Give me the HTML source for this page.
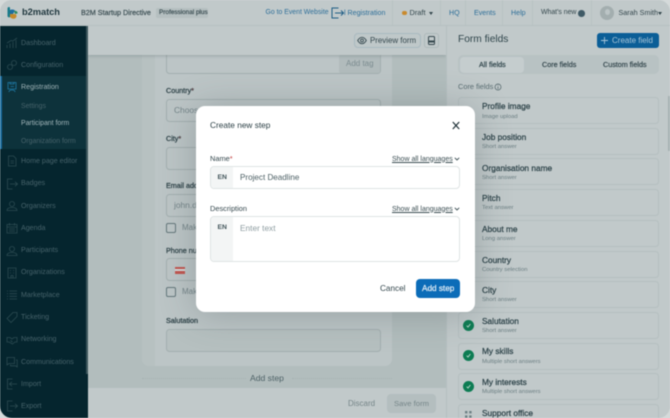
<!DOCTYPE html>
<html><head><meta charset="utf-8">
<style>
*{box-sizing:border-box}
html,body{margin:0;padding:0;width:670px;height:418px;overflow:hidden;background:#d5dada}
body{font-family:"Liberation Sans",sans-serif}
#page{position:absolute;left:0;top:0;width:670px;height:418px;overflow:hidden;border-radius:12px;background:#b2bdbd;filter:blur(.45px)}
.a{position:absolute;white-space:nowrap;line-height:1}
.m{-webkit-text-stroke:.2px currentColor}
.box{position:absolute}
.nav{position:absolute;left:21px;font-size:7.1px;line-height:10px;color:#46626a;white-space:nowrap}
.ic{position:absolute;left:6px;width:12px;height:12px;fill:none;stroke:#2c4b52;stroke-width:.8}
.lab{position:absolute;font-size:7.2px;line-height:9px;color:#2c4046;white-space:nowrap;-webkit-text-stroke:.25px #2c4046}
.inp{position:absolute;background:#bcc5c6;border:1px solid #a3afb0;border-radius:3.5px}
.cb{position:absolute;left:166px;width:10px;height:10px;border:1px solid #64777b;border-radius:2px}
.fc{position:absolute;left:458px;width:201px;height:27px;border:1px solid #b5bfc0;border-radius:3.5px;background:#c1c9ca}
.ft{position:absolute;left:482px;font-size:8.3px;line-height:10px;color:#2f454b;white-space:nowrap;-webkit-text-stroke:.25px #2f454b}
.fs{position:absolute;left:482px;font-size:5.9px;line-height:8px;color:#6c7f83;white-space:nowrap}
.chk{position:absolute;left:463px;width:11px;height:11px;border-radius:50%;background:#0d7c53}
.chk svg{position:absolute;left:3px;top:3px;width:5px;height:5px;fill:none;stroke:#b7d5c7;stroke-width:1}
.top{position:absolute;top:8px;font-size:7.1px;line-height:10px;color:#2e6f99;white-space:nowrap}
.sep{position:absolute;top:0;width:1px;height:25px;background:#b9c3c4}
.mt{position:absolute;font-size:7.6px;line-height:10px;color:#34474d;white-space:nowrap}
.show{position:absolute;left:392px;font-size:7px;line-height:9px;color:#3a4d52;text-decoration:underline;white-space:nowrap}
.chev{position:absolute;left:453.5px;width:6px;height:4px;fill:none;stroke:#3a4d52;stroke-width:.9}
</style></head><body>
<div id="page">

<!-- main content -->
<div class="box" style="left:142px;top:55px;width:250px;height:311px;background:#bcc5c6;border-radius:0 0 7px 7px"></div>
<div class="box" style="left:142px;top:55px;width:13px;height:311px;background:#b7c1c1;border-radius:0 0 0 7px"></div>

<div class="inp" style="left:166px;top:52px;width:215px;height:22px"></div>
<div class="box" style="left:339px;top:55px;width:41px;height:18px;background:#b1bbbc;border-radius:2px"></div>
<div class="a" style="left:346px;top:60px;font-size:8px;color:#7c8c90">Add tag</div>

<div class="lab" style="left:166px;top:86px">Country<span style="color:#b13a3a">*</span></div>
<div class="inp" style="left:166px;top:99px;width:215px;height:23px"></div>
<div class="a" style="left:174px;top:106px;font-size:8.4px;color:#748488">Choose</div>

<div class="lab" style="left:166px;top:134px">City<span style="color:#b13a3a">*</span></div>
<div class="inp" style="left:166px;top:147px;width:215px;height:23px"></div>

<div class="lab" style="left:166px;top:181px">Email address</div>
<div class="inp" style="left:166px;top:194px;width:215px;height:23px"></div>
<div class="a" style="left:174px;top:201px;font-size:8.4px;color:#748488">john.doe</div>
<div class="cb" style="top:223px"></div>
<div class="a" style="left:182px;top:224px;font-size:8px;color:#748488">Make</div>

<div class="lab" style="left:166px;top:246px">Phone number</div>
<div class="inp" style="left:166px;top:258px;width:215px;height:23px"></div>
<div class="box" style="left:175px;top:267px;width:10px;height:2.2px;background:#c2554f"></div>
<div class="box" style="left:175px;top:269.2px;width:10px;height:2.2px;background:#d7dcdc"></div>
<div class="box" style="left:175px;top:271.4px;width:10px;height:2.2px;background:#c2554f"></div>
<div class="cb" style="top:287px"></div>
<div class="a" style="left:182px;top:288px;font-size:8px;color:#748488">Make</div>

<div class="lab" style="left:166px;top:316px">Salutation</div>
<div class="inp" style="left:166px;top:329px;width:215px;height:23px;background:#b6c0c0"></div>

<div class="box" style="left:142px;top:377.5px;width:104px;border-top:1px dotted #a6b1b1"></div>
<div class="box" style="left:292px;top:377.5px;width:100px;border-top:1px dotted #a6b1b1"></div>
<div class="a" style="left:250px;top:373.5px;font-size:8.6px;color:#4e6267">Add step</div>

<!-- sub bar -->
<div class="box" style="left:88px;top:26px;width:358px;height:29px;background:#c1c9ca;box-shadow:0 1px 3px rgba(90,105,108,.35)"></div>
<div class="box" style="left:354px;top:33px;width:67px;height:15px;border:1px solid #a9b9c0;border-radius:4px;background:#bfc8c9"></div>
<svg class="box" style="left:357px;top:36px;width:10px;height:9px" viewBox="0 0 10 9" fill="none" stroke="#34474d" stroke-width=".9"><path d="M.7 4.5C2 2.3 3.4 1.3 5 1.3S8 2.3 9.3 4.5C8 6.7 6.6 7.7 5 7.7S2 6.7.7 4.5Z"/><circle cx="5" cy="4.5" r="1.4"/></svg>
<div class="a" style="left:370px;top:36.5px;font-size:7.9px;color:#34474d">Preview form</div>
<div class="box" style="left:424px;top:33px;width:15px;height:15px;border:1px solid #adb9ba;border-radius:3px"></div>
<svg class="box" style="left:428px;top:36px;width:7px;height:9px" viewBox="0 0 7 9"><rect x=".5" y=".5" width="6" height="8" rx="1" fill="none" stroke="#34474d"/><rect x=".5" y="4.5" width="6" height="2" fill="#34474d"/></svg>

<!-- bottom bar -->
<div class="box" style="left:88px;top:388px;width:358px;height:30px;background:#c1c9ca"></div>
<div class="a" style="left:348px;top:400px;font-size:8px;color:#768689">Discard</div>
<div class="box" style="left:387px;top:394px;width:49px;height:19px;background:#b4bebf;border-radius:4px"></div>
<div class="a" style="left:394px;top:400px;font-size:7.7px;color:#768689">Save form</div>

<!-- right panel -->
<div class="box" style="left:446px;top:26px;width:224px;height:392px;background:#c1c9ca;border-left:1px solid #b5bfc0"></div>
<div class="a" style="left:458px;top:34.5px;font-size:10.2px;color:#2f454b">Form fields</div>
<div class="box" style="left:597px;top:33px;width:62px;height:15px;background:#0b5e97;border-radius:3px"></div>
<svg class="box" style="left:601px;top:37px;width:7px;height:7px" viewBox="0 0 7 7" stroke="#a8c5d8" stroke-width=".9"><path d="M3.5 0V7M0 3.5H7"/></svg>
<div class="a" style="left:612px;top:37px;font-size:8px;color:#a8c5d8">Create field</div>
<div class="box" style="left:458px;top:55px;width:201px;height:19px;background:#b8c2c3;border-radius:5px"></div>
<div class="box" style="left:460px;top:57px;width:64px;height:15.5px;background:#c5cdce;border-radius:4px"></div>
<div class="a m" style="left:479px;top:61px;font-size:7.2px;color:#2f454b">All fields</div>
<div class="a m" style="left:542px;top:61px;font-size:7.2px;color:#34474d">Core fields</div>
<div class="a m" style="left:603px;top:61px;font-size:7.2px;color:#34474d">Custom fields</div>
<div class="a" style="left:458px;top:83px;font-size:7.4px;color:#5a6d72">Core fields</div>
<svg class="box" style="left:494px;top:83px;width:8px;height:8px" viewBox="0 0 8 8" fill="none" stroke="#4f6267" stroke-width=".7"><circle cx="4" cy="4" r="3"/><path d="M4 3.5V6M4 2V2.8"/></svg>

<div class="fc" style="top:97px"></div><div class="ft" style="top:101px">Profile image</div><div class="fs" style="top:112.5px">Image upload</div>
<div class="fc" style="top:127.6px"></div><div class="ft" style="top:131.5px">Job position</div><div class="fs" style="top:143px">Short answer</div>
<div class="fc" style="top:158.4px"></div><div class="ft" style="top:162.5px">Organisation name</div><div class="fs" style="top:173.5px">Short answer</div>
<div class="fc" style="top:189px"></div><div class="ft" style="top:193px">Pitch</div><div class="fs" style="top:204px">Text answer</div>
<div class="fc" style="top:219.8px"></div><div class="ft" style="top:223.5px">About me</div><div class="fs" style="top:235px">Long answer</div>
<div class="fc" style="top:250.6px"></div><div class="ft" style="top:254.5px">Country</div><div class="fs" style="top:265.5px">Country selection</div>
<div class="fc" style="top:281.3px"></div><div class="ft" style="top:285px">City</div><div class="fs" style="top:296px">Short answer</div>
<div class="fc" style="top:311.6px"></div><div class="ft" style="top:315.5px">Salutation</div><div class="fs" style="top:327px">Short answer</div>
<div class="chk" style="top:319.5px"><svg viewBox="0 0 5 5"><path d="M.7 2.7 2 4 4.4 1"/></svg></div>
<div class="fc" style="top:342.5px"></div><div class="ft" style="top:346px">My skills</div><div class="fs" style="top:357.5px">Multiple short answers</div>
<div class="chk" style="top:350px"><svg viewBox="0 0 5 5"><path d="M.7 2.7 2 4 4.4 1"/></svg></div>
<div class="fc" style="top:373px"></div><div class="ft" style="top:377px">My interests</div><div class="fs" style="top:388px">Multiple short answers</div>
<div class="chk" style="top:380.5px"><svg viewBox="0 0 5 5"><path d="M.7 2.7 2 4 4.4 1"/></svg></div>
<div class="fc" style="top:403.6px;height:30px"></div><div class="ft" style="top:408px">Support office</div>
<svg class="box" style="left:465px;top:411px;width:7px;height:7px" viewBox="0 0 7 7" fill="#6c7f83"><rect width="2.4" height="2.4"/><rect x="4.2" width="2.4" height="2.4"/><rect y="4.4" width="2.4" height="2.4"/><rect x="4.2" y="4.4" width="2.4" height="2.4"/></svg>
<div class="box" style="left:667.5px;top:96px;width:2.5px;height:55px;background:#a7b2b3"></div>

<!-- top bar -->
<div class="box" style="left:0;top:0;width:670px;height:26px;background:#c1c9ca;border-bottom:1px solid #b6c0c1"></div>
<svg class="box" style="left:6px;top:6px;width:13px;height:14px" viewBox="0 0 13 14"><path d="M1.5 2.5C1.5 1 3 .5 4 1.5V11C3 12 1.5 11 1.5 10Z" fill="#1a7b8a"/><path d="M4 4C6 3 8 3.5 9 4.5L7 8 4 8Z" fill="#1d6ea1"/><path d="M4 8H8.5C10.5 8 11 10 10 11.5 8.5 13.5 5.500 13 4 11Z" fill="#c58a2b"/><path d="M8 5C10 4.5 12 5.5 11.5 7.5L9 8Z" fill="#2d8a62"/></svg>
<div class="a" style="left:22px;top:8px;font-size:9.3px;font-weight:bold;color:#20383f;letter-spacing:-.05px">b2match</div>
<div class="a m" style="left:81px;top:9px;font-size:7.2px;color:#3b4e53">B2M Startup Directive</div>
<div class="box" style="left:156px;top:8px;width:52px;height:10px;background:#b5bfc0;border-radius:2px"></div>
<div class="a m" style="left:159px;top:9.5px;font-size:6.4px;color:#3b4e53">Professional plus</div>
<div class="top" style="left:265.5px;font-size:6.9px">Go to Event Website</div>
<svg class="box" style="left:331px;top:7px;width:13px;height:12px" viewBox="0 0 13 12" fill="none" stroke="#1f5d85" stroke-width="1"><path d="M7.5 1H1V11H7.5M4 6H12.5M10 3.5 12.5 6 10 8.5"/></svg>
<div class="top" style="left:344px">l Registration</div>
<div class="sep" style="left:392px"></div>
<div class="box" style="left:402px;top:10.5px;width:4.5px;height:4.5px;border-radius:50%;background:#c98a2e"></div>
<div class="a" style="left:409.5px;top:8.8px;font-size:7.4px;color:#34474d">Draft</div>
<div class="box" style="left:429px;top:11.5px;border:2.5px solid transparent;border-top:3px solid #34474d"></div>
<div class="sep" style="left:440px"></div>
<div class="top" style="left:449px">HQ</div>
<div class="sep" style="left:465px"></div>
<div class="top" style="left:474px">Events</div>
<div class="sep" style="left:502px"></div>
<div class="top" style="left:511px">Help</div>
<div class="sep" style="left:532px"></div>
<div class="top" style="left:541px;color:#34474d;font-size:6.9px">What's new</div>
<div class="box" style="left:578px;top:10px;width:6.5px;height:6.5px;border-radius:50%;background:#3f5a66"></div>
<div class="sep" style="left:591px"></div>
<div class="box" style="left:600px;top:6px;width:14px;height:14px;border-radius:50%;background:#a3aeaf"></div>
<div class="box" style="left:604.5px;top:8.5px;width:5px;height:6px;border-radius:50%;background:#bcc5c6"></div>
<div class="a" style="left:618.5px;top:8.8px;font-size:7.2px;color:#34474d">Sarah Smith</div>
<div class="box" style="left:658px;top:11.5px;border:2.2px solid transparent;border-top:3px solid #34474d"></div>

<!-- sidebar -->
<div class="box" style="left:0;top:26px;width:88px;height:392px;background:#05252e"></div>
<div class="box" style="left:0;top:76px;width:86px;height:73px;background:#0d323b"></div>
<div class="box" style="left:0;top:76px;width:1.5px;height:73px;background:#1a6d9f"></div>
<div class="box" style="left:86px;top:26px;width:2px;height:348px;background:#3d565c"></div>

<svg class="ic" style="top:37px" viewBox="0 0 12 12"><path d="M1 11V8M4 11V6.5M7 11V5M10 11V3M1 6 5 3.5 7 4 11 1"/></svg><div class="nav" style="top:37.5px">Dashboard</div>
<svg class="ic" style="top:59px" viewBox="0 0 12 12"><circle cx="8" cy="4" r="2.5"/><circle cx="4" cy="8" r="2.5"/></svg><div class="nav" style="top:59.8px">Configuration</div>
<svg class="ic" style="top:81px;stroke:#1f7aa6" viewBox="0 0 12 12"><path d="M2 1.5H10V8H2ZM4 1V3H8V1M3 11C3 9 5 9 6 9S9 9 9 11M4.5 5.5H8"/></svg><div class="nav" style="top:82px;color:#9eb2b6">Registration</div>
<div class="nav" style="top:101.5px;font-size:6.9px">Settings</div>
<div class="nav" style="top:119px;font-size:6.9px;color:#a3b7bb">Participant form</div>
<div class="nav" style="top:136.5px;font-size:6.9px">Organization form</div>
<svg class="ic" style="top:155px" viewBox="0 0 12 12"><path d="M2.5 1H7.5L10 3.5V11H2.5ZM4.5 6H8M4.5 8H8"/></svg><div class="nav" style="top:156px">Home page editor</div>
<svg class="ic" style="top:178px" viewBox="0 0 12 12"><path d="M6.5 1H1.5V11H6.5M4 6H11.5M9 3.8 11.5 6 9 8.2"/></svg><div class="nav" style="top:178.3px">Badges</div>
<svg class="ic" style="top:200px" viewBox="0 0 12 12"><circle cx="6" cy="4" r="2.5"/><path d="M1 10.5C1 8 4 7.5 6 7.5S11 8 11 10.5Z"/></svg><div class="nav" style="top:200.6px">Organizers</div>
<svg class="ic" style="top:222px" viewBox="0 0 12 12"><path d="M1 2.5H11V11H1ZM1 5H11M3.5 1V3.5M8.5 1V3.5M3 7H9M3 9H9"/></svg><div class="nav" style="top:222.8px">Agenda</div>
<svg class="ic" style="top:245px" viewBox="0 0 12 12"><circle cx="6" cy="4" r="2.5"/><path d="M1 10.5C1 8 4 7.5 6 7.5S11 8 11 10.5Z"/></svg><div class="nav" style="top:245.1px">Participants</div>
<svg class="ic" style="top:267px" viewBox="0 0 12 12"><path d="M2 1H10V11H2ZM4 3.5H5M7 3.5H8M4 6H5M7 6H8M5 11V8.5H7V11"/></svg><div class="nav" style="top:267.4px">Organizations</div>
<svg class="ic" style="top:289px" viewBox="0 0 12 12"><path d="M3.5 2H11M3.5 4.7H11M3.5 7.3H11M3.5 10H11M1 2H2M1 4.7H2M1 7.3H2M1 10H2"/></svg><div class="nav" style="top:289.7px">Marketplace</div>
<svg class="ic" style="top:311px" viewBox="0 0 12 12"><path d="M1 7.5 7 1.5H11V5.5L5 11.5Z"/></svg><div class="nav" style="top:312px">Ticketing</div>
<svg class="ic" style="top:334px" viewBox="0 0 12 12"><path d="M1 3.5H4L6 5 8 3.5H11V8H9L6.5 10 3 8H1ZM4.5 6.5 6.5 8"/></svg><div class="nav" style="top:334.3px">Networking</div>
<svg class="ic" style="top:356px" viewBox="0 0 12 12"><path d="M1 1.5H8.5V7.5H3L1 9ZM10 4H11.2V11L9.5 9.8H4.5V8.5"/></svg><div class="nav" style="top:356.5px">Communications</div>
<svg class="ic" style="top:378px" viewBox="0 0 12 12"><path d="M6.5 1H1.5V11H6.5M11 6H3.5M6 3.8 3.5 6 6 8.2"/></svg><div class="nav" style="top:378.8px">Import</div>
<svg class="ic" style="top:400px" viewBox="0 0 12 12"><path d="M6.5 1H1.5V11H6.5M4 6H11.5M9 3.8 11.5 6 9 8.2"/></svg><div class="nav" style="top:401px">Export</div>

<!-- modal -->
<div class="box" style="left:196px;top:106px;width:279px;height:206px;background:#fff;border-radius:9px;box-shadow:0 2px 36px rgba(70,85,88,.32)"></div>
<div class="a" style="left:210px;top:120.5px;font-size:8.3px;color:#2b3f45">Create new step</div>
<svg class="box" style="left:452px;top:121px;width:8px;height:9px" viewBox="0 0 8 9" stroke="#1f3138" stroke-width="1.2"><path d="M.8 1 7.200 8M7.200 1 .8 8"/></svg>

<div class="mt" style="left:210px;top:153.5px;font-size:7.4px">Name<span style="color:#c23b3b">*</span></div>
<div class="show" style="top:154.5px">Show all languages</div>
<svg class="chev" style="top:157px" viewBox="0 0 6 4"><path d="M.8.8 3 3 5.200.8"/></svg>
<div class="box" style="left:210px;top:166px;width:250px;height:23px;border:1px solid #dfe4e4;border-radius:4px;overflow:hidden"><div style="position:absolute;left:0;top:0;width:22px;height:100%;background:#f3f5f5"></div></div>
<div class="a" style="left:217.5px;top:174.5px;font-size:6.8px;font-weight:bold;color:#42555a">EN</div>
<div class="a" style="left:240px;top:174px;font-size:8.100px;color:#4e6166">Project Deadline</div>

<div class="mt" style="left:210px;top:204px;font-size:7.4px">Description</div>
<div class="show" style="top:204.5px">Show all languages</div>
<svg class="chev" style="top:207px" viewBox="0 0 6 4"><path d="M.8.8 3 3 5.200.8"/></svg>
<div class="box" style="left:210px;top:216px;width:250px;height:45.5px;border:1px solid #dfe4e4;border-radius:4px;overflow:hidden"><div style="position:absolute;left:0;top:0;width:22px;height:100%;background:#f3f5f5"></div></div>
<div class="a" style="left:217.5px;top:224.5px;font-size:6.8px;font-weight:bold;color:#42555a">EN</div>
<div class="a" style="left:240px;top:223.5px;font-size:8.3px;color:#8e9da1">Enter text</div>

<div class="a" style="left:380px;top:284.5px;font-size:8.200px;color:#34474d">Cancel</div>
<div class="box" style="left:415.5px;top:279px;width:44.5px;height:18.5px;background:#0b6cb8;border-radius:4px"></div>
<div class="a m" style="left:422px;top:284.5px;font-size:8.200px;color:#e4eef6">Add step</div>

</div>
</body></html>
